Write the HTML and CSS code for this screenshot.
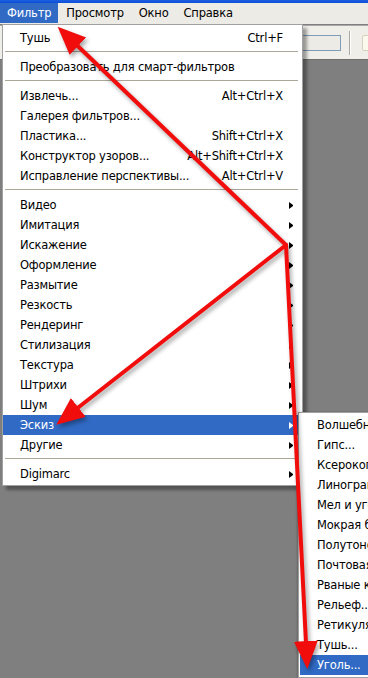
FILE: index.html
```
<!DOCTYPE html>
<html lang="ru">
<head>
<meta charset="utf-8">
<link rel="stylesheet" href="styles.css">
</head>
<body>
<div class="screen">
  <div class="titlebar"></div>
  <div class="menubar">
    <span class="mb-item active">Фильтр</span>
    <span class="mb-item">Просмотр</span>
    <span class="mb-item">Окно</span>
    <span class="mb-item">Справка</span>
  </div>
  <div class="optbar">
    <div class="field"></div>
    <div class="vsep"></div>
    <div class="field2"></div>
  </div>
  <div class="workspace"></div>

  <div class="menu main">
    <div class="item"><span class="label">Тушь</span><span class="key">Ctrl+F</span><span class="arr none"></span></div>
    <div class="sep"></div>
    <div class="item"><span class="label">Преобразовать для смарт-фильтров</span><span class="arr none"></span></div>
    <div class="sep"></div>
    <div class="item"><span class="label">Извлечь...</span><span class="key">Alt+Ctrl+X</span><span class="arr none"></span></div>
    <div class="item"><span class="label">Галерея фильтров...</span><span class="arr none"></span></div>
    <div class="item"><span class="label">Пластика...</span><span class="key">Shift+Ctrl+X</span><span class="arr none"></span></div>
    <div class="item"><span class="label">Конструктор узоров...</span><span class="key">Alt+Shift+Ctrl+X</span><span class="arr none"></span></div>
    <div class="item"><span class="label">Исправление перспективы...</span><span class="key">Alt+Ctrl+V</span><span class="arr none"></span></div>
    <div class="sep"></div>
    <div class="item"><span class="label">Видео</span><span class="arr"></span></div>
    <div class="item"><span class="label">Имитация</span><span class="arr"></span></div>
    <div class="item"><span class="label">Искажение</span><span class="arr"></span></div>
    <div class="item"><span class="label">Оформление</span><span class="arr"></span></div>
    <div class="item"><span class="label">Размытие</span><span class="arr"></span></div>
    <div class="item"><span class="label">Резкость</span><span class="arr"></span></div>
    <div class="item"><span class="label">Рендеринг</span><span class="arr"></span></div>
    <div class="item"><span class="label">Стилизация</span><span class="arr"></span></div>
    <div class="item"><span class="label">Текстура</span><span class="arr"></span></div>
    <div class="item"><span class="label">Штрихи</span><span class="arr"></span></div>
    <div class="item"><span class="label">Шум</span><span class="arr"></span></div>
    <div class="item hl"><span class="label">Эскиз</span><span class="arr"></span></div>
    <div class="item"><span class="label">Другие</span><span class="arr"></span></div>
    <div class="sep"></div>
    <div class="item"><span class="label">Digimarc</span><span class="arr"></span></div>
  </div>

  <div class="menu sub">
    <div class="item"><span class="label">Волшебный карандаш...</span></div>
    <div class="item"><span class="label">Гипс...</span></div>
    <div class="item"><span class="label">Ксерокопия...</span></div>
    <div class="item"><span class="label">Линогравюра...</span></div>
    <div class="item"><span class="label">Мел и уголь...</span></div>
    <div class="item"><span class="label">Мокрая бумага...</span></div>
    <div class="item"><span class="label">Полутоновый узор...</span></div>
    <div class="item"><span class="label">Почтовая бумага...</span></div>
    <div class="item"><span class="label">Рваные края...</span></div>
    <div class="item"><span class="label">Рельеф...</span></div>
    <div class="item"><span class="label">Ретикуляция...</span></div>
    <div class="item"><span class="label">Тушь...</span></div>
    <div class="item hl"><span class="label">Уголь...</span></div>
  </div>

  <svg class="arrows" width="368" height="678" viewBox="0 0 368 678">
    <defs>
      <marker id="head" markerUnits="userSpaceOnUse" markerWidth="30" markerHeight="26" refX="22" refY="12" orient="auto">
        <path d="M0,0 L28,12 L0,24 Z" fill="#f20d0d"/>
      </marker>
    </defs>
    <g fill="none" stroke="#f20d0d" stroke-width="4" stroke-linecap="round" stroke-linejoin="round">
      <line x1="286" y1="245" x2="62" y2="31" marker-end="url(#head)"/>
      <line x1="286" y1="245" x2="61" y2="421" marker-end="url(#head)"/>
      <line x1="286" y1="245" x2="307" y2="663" marker-end="url(#head)"/>
    </g>
  </svg>
</div>
</body>
</html>
```
FILE: styles.css
```
* { box-sizing: border-box; }
html, body {
  margin: 0;
  padding: 0;
  width: 368px;
  height: 678px;
  overflow: hidden;
}
body {
  font-family: "DejaVu Sans", Verdana, sans-serif;
  font-size: 11.5px;
  letter-spacing: -0.2px;
  color: #000;
}
.screen {
  position: relative;
  width: 368px;
  height: 678px;
  display: flex;
  flex-direction: column;
  background: #7f7f7f;
  overflow: hidden;
}
.titlebar {
  height: 3px;
  background: linear-gradient(#1d5fe0, #0a4ed8);
}
.menubar {
  height: 21px;
  display: flex;
  align-items: stretch;
  background: #ecebe5;
  padding-bottom: 1px;
}
.mb-item {
  display: flex;
  align-items: center;
  padding: 0 7px;
}
.mb-item.active {
  background: #316ac5;
  color: #fff;
}
.mb-item + .mb-item {
  padding-left: 8px;
}
.optbar {
  height: 34px;
  background: #efeee9;
  border-top: 1px solid #a9a9a9;
  margin-top: 1px;
  display: flex;
  align-items: center;
  padding-left: 298px;
  gap: 8px;
}
.field {
  flex: none;
  width: 43px;
  height: 16px;
  border: 1px solid #7f9db9;
  background: #ecebe5;
}
.vsep {
  flex: none;
  width: 2px;
  height: 24px;
  background: #a8a8a0;
  border-right: 1px solid #fff;
}
.field2 {
  width: 20px;
  height: 16px;
  flex: none;
  margin-left: 3px;
  border: 1px solid #d5d2c2;
  border-radius: 2px;
  background: #fbf8ee;
}
.workspace {
  flex: 1;
  background: #7f7f7f;
  border-top: 1px solid #6e6e6e;
}
.menu {
  position: absolute;
  background: #fff;
  border: 1px solid #a0a0a0;
  display: flex;
  flex-direction: column;
}
.menu.main {
  left: 2px;
  top: 24px;
  width: 301px;
  padding: 3px 0 1px;
  box-shadow: 4px 4px 3px rgba(0, 0, 0, 0.35);
}
.menu.sub {
  left: 298px;
  top: 412px;
  width: 140px;
  padding: 2px 0 2px 1px;
  box-shadow: -1px 0 2px rgba(0, 0, 0, 0.2);
}
.item {
  height: 20px;
  display: flex;
  align-items: center;
  padding: 0 9px 0 17px;
  white-space: nowrap;
}
.sub .item {
  padding-left: 17px;
}
.label {
  flex: 1;
}
.key {
  margin-right: 6px;
}
.arr {
  width: 4px;
  height: 7px;
  flex: none;
  border-left: 4px solid #000;
  border-top: 3.5px solid transparent;
  border-bottom: 3.5px solid transparent;
}
.arr.none {
  border-left-color: transparent;
}
.item.hl {
  background: #316ac5;
  color: #fff;
}
.item.hl .arr {
  border-left-color: #fff;
}
.sep {
  height: 9px;
  padding: 3px 4px 0 2px;
}
.sep::before {
  content: "";
  display: block;
  border-top: 1px solid #aca899;
}
.arrows {
  position: absolute;
  left: 0;
  top: 0;
  filter: drop-shadow(2px 3px 2px rgba(0, 0, 0, 0.35));
  pointer-events: none;
}
```
